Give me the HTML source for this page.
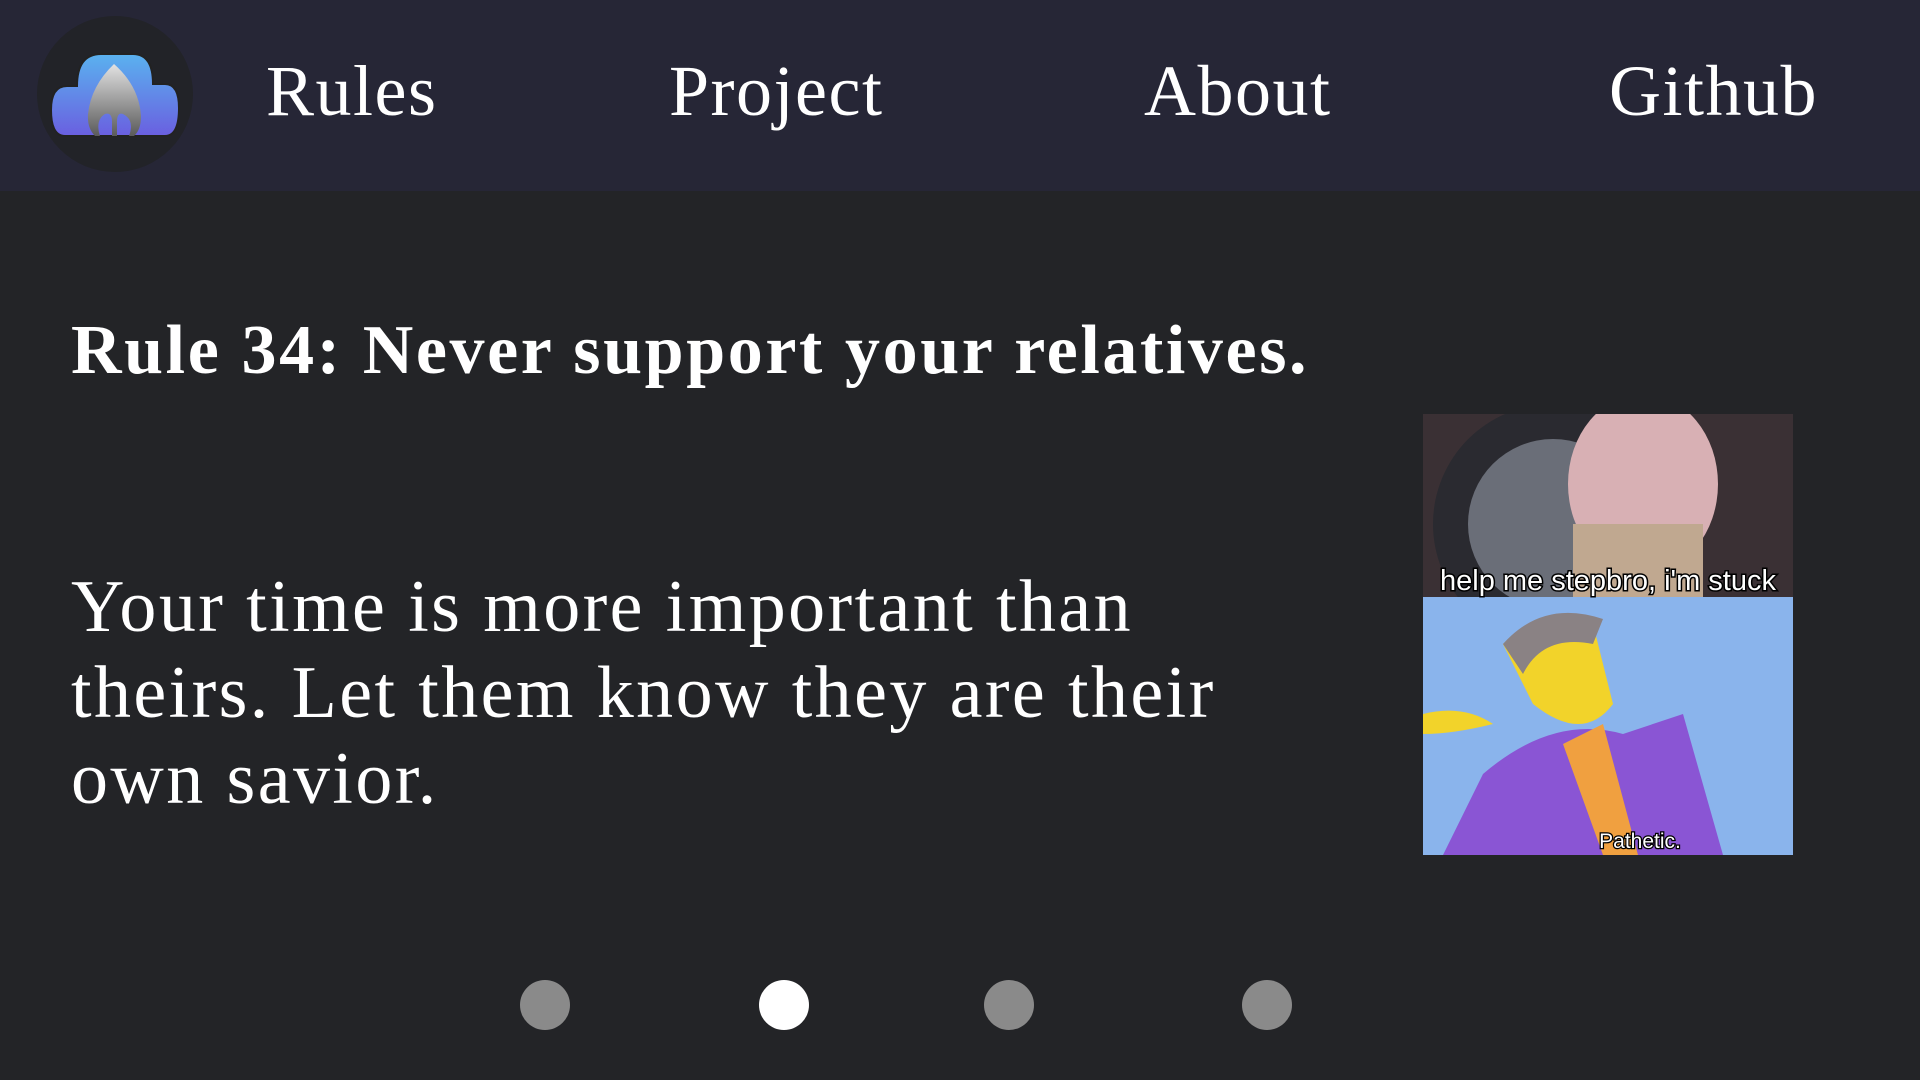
<!DOCTYPE html>
<html><head><meta charset="utf-8"><style>
*{margin:0;padding:0;box-sizing:border-box}
body{width:1920px;height:1080px;background:#232427;overflow:hidden;position:relative;font-family:"Liberation Serif",serif;color:#fff}
.hdr{position:absolute;left:0;top:0;width:1920px;height:191px;background:#262636}
.logo{position:absolute;left:37px;top:16px;width:156px;height:156px;border-radius:50%;background:#222328}
.nav{position:absolute;top:46px;font-size:72px;line-height:90px;color:#fff;letter-spacing:1.5px}
h1{position:absolute;left:71px;top:311px;font-size:70px;font-weight:bold;white-space:nowrap;letter-spacing:2.6px}
p{position:absolute;left:71px;top:564px;font-size:74px;line-height:86px;white-space:nowrap;letter-spacing:2.4px}
.dot{position:absolute;top:980px;width:50px;height:50px;border-radius:50%;background:#8a8a8a}
.meme{position:absolute;left:1423px;top:414px;width:370px;height:441px}
</style></head><body>
<div class="hdr">
<div class="logo"><svg width="156" height="156" viewBox="0 0 156 156">
<defs><linearGradient id="b" x1="0" y1="0" x2="0" y2="1"><stop offset="0" stop-color="#5ab2ef"/><stop offset="1" stop-color="#6a5fe0"/></linearGradient>
<linearGradient id="g" x1="0" y1="0" x2="0" y2="1"><stop offset="0" stop-color="#e2e2e2"/><stop offset="1" stop-color="#5a5a5a"/></linearGradient></defs>
<path d="M40 70 Q40 38 64 38 L96 38 Q116 38 116 68 L128 68 Q142 68 142 92 Q142 120 128 120 L28 120 Q14 120 14 94 Q14 70 30 70 Z" fill="url(#b)" stroke="#222" stroke-width="2"/>
<path d="M77 48 Q102 70 104 100 Q104 114 97 120 L92 120 Q98 104 86 98 Q80 96 80 106 L80 120 L75 120 L75 106 Q75 96 68 98 Q58 104 63 120 L58 120 Q50 112 51 98 Q54 70 77 48 Z" fill="url(#g)"/>
</svg></div>
<div class="nav" style="left:266px">Rules</div>
<div class="nav" style="left:669px">Project</div>
<div class="nav" style="left:1144px">About</div>
<div class="nav" style="left:1609px">Github</div>
</div>
<h1>Rule 34: Never support your relatives.</h1>
<p>Your time is more important than<br>theirs. Let them know they are their<br>own savior.</p>
<svg class="meme" viewBox="0 0 370 441">
<rect width="370" height="183" fill="#3a3034"/>
<circle cx="130" cy="110" r="120" fill="#2a2a30"/>
<circle cx="130" cy="110" r="85" fill="#6a6e78"/>
<ellipse cx="220" cy="70" rx="75" ry="90" fill="#d8b0b4"/>
<rect x="150" y="110" width="130" height="73" fill="#c0a890"/>
<rect y="183" width="370" height="258" fill="#8ab4ec"/>
<path d="M80 230 Q120 190 170 210 L190 290 Q160 330 110 290 Z" fill="#f2d32a"/>
<path d="M80 230 Q120 185 180 205 L170 230 Q120 220 100 260 Z" fill="#8a8284"/>
<path d="M20 441 L60 360 Q130 300 200 320 L260 300 L300 441 Z" fill="#8a55d4"/>
<path d="M140 330 L180 310 L215 441 L180 441 Z" fill="#f0a040"/>
<path d="M0 300 Q40 290 70 310 Q30 320 0 320 Z" fill="#f2d32a"/>
<text x="185" y="176" font-family="Liberation Sans,sans-serif" font-size="29" fill="#fff" stroke="#000" stroke-width="3" paint-order="stroke" text-anchor="middle">help me stepbro, i'm stuck</text>
<text x="217" y="434" font-family="Liberation Sans,sans-serif" font-size="21" fill="#fff" stroke="#000" stroke-width="2.5" paint-order="stroke" text-anchor="middle">Pathetic.</text>
</svg>
<div class="dot" style="left:520px"></div>
<div class="dot" style="left:759px;background:#fff"></div>
<div class="dot" style="left:984px"></div>
<div class="dot" style="left:1242px"></div>
</body></html>
